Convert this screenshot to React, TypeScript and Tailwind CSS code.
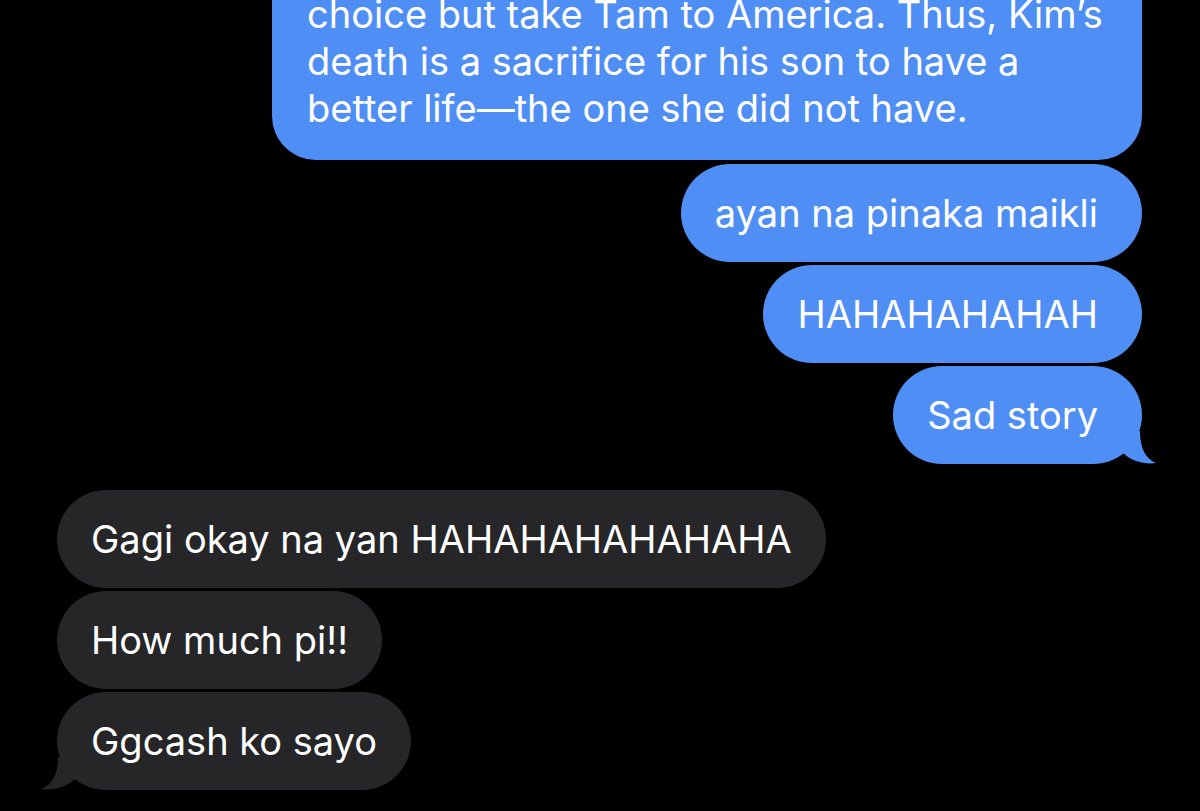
import React from 'react'

const sent = ['ayan na pinaka maikli', 'HAHAHAHAHAH', 'Sad story']
const received = ['Gagi okay na yan HAHAHAHAHAHAHA', 'How much pi!!', 'Ggcash ko sayo']

function TailRight() {
  return (
    <svg className="absolute bottom-0 right-[-16px]" width="38" height="33" viewBox="0 0 38 33">
      <path d="M20 0 C20 18 26 28 36 32 C26 33.5 12 31 3 22 L3 0 Z" fill="#4f8ff5" />
    </svg>
  )
}

function TailLeft() {
  return (
    <svg className="absolute bottom-0 left-[-17px]" width="38" height="33" viewBox="0 0 38 33">
      <path d="M18 0 C18 18 12 28 1 32 C12 33.5 26 31 35 22 L35 0 Z" fill="#262629" />
    </svg>
  )
}

export default function App() {
  return (
    <div className="h-[811px] w-[1200px] overflow-hidden bg-black font-['Inter',sans-serif] text-[38px] leading-[47px] text-white">
      <div className="flex justify-end pr-[58px]">
        <div className="-mt-[9px] w-[870px] rounded-b-[44px] bg-[#4f8ff5] pb-[28px] pl-[35px]">
          <div>choice but take Tam to America. Thus, Kim’s</div>
          <div>death is a sacrifice for his son to have a</div>
          <div>better life—the one she did not have.</div>
        </div>
      </div>

      <div className="mt-[4px] flex flex-col items-end gap-[3px] pr-[58px]">
        {sent.map((m, i) => (
          <div key={i} className="relative flex h-[98px] items-center rounded-[49px] bg-[#4f8ff5] pl-[34px] pr-[44px]">
            {m}
            {i === sent.length - 1 ? <TailRight /> : null}
          </div>
        ))}
      </div>

      <div className="mt-[26px] flex flex-col items-start gap-[3px] pl-[57px]">
        {received.map((m, i) => (
          <div key={i} className="relative flex h-[98px] items-center rounded-[49px] bg-[#262629] pl-[34px] pr-[34px]">
            {m}
            {i === received.length - 1 ? <TailLeft /> : null}
          </div>
        ))}
      </div>
    </div>
  )
}
